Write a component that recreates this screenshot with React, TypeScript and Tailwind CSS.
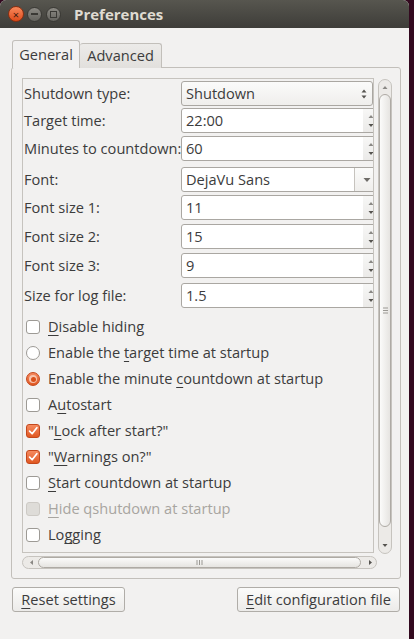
import React from 'react'

const FONT = { fontFamily: '"Open Sans", "Noto Sans", "DejaVu Sans", sans-serif' }

//////////
// small glyphs
const SpinArrows = () => (
    <svg width="8" height="22" viewBox="0 0 8 22">
        <path d="M1.5 8 L4 5 L6.5 8 Z" fill="#8a8884" />
        <path d="M1.5 14 L4 17 L6.5 14 Z" fill="#55534f" />
    </svg>
)

const ComboArrows = () => (
    <svg width="8" height="14" viewBox="0 0 8 14">
        <path d="M1.5 5.5 L4 2.5 L6.5 5.5 Z" fill="#55534f" />
        <path d="M1.5 8.5 L4 11.5 L6.5 8.5 Z" fill="#55534f" />
    </svg>
)

const Check = () => (
    <svg width="14" height="14" viewBox="0 0 14 14">
        <path d="M3 7.2 L6 10.2 L11.5 3.2" fill="none" stroke="#ffffff" strokeWidth="2" strokeLinecap="round" strokeLinejoin="round" />
    </svg>
)

//////////
// form fields
function SpinBox({ value }: { value: string }) {
    return (
        <div className="flex h-[25px] w-[199px] shrink-0 rounded-[3px] border border-[#aaa7a2] bg-white">
            <div className="flex flex-1 items-center pl-[4px]">{value}</div>
            <div className="flex w-[16px] items-center justify-center rounded-r-[3px] bg-gradient-to-b from-[#f7f7f6] to-[#ebeae8]">
                <SpinArrows />
            </div>
        </div>
    )
}

function Row({ label, children, className = '' }: { label: string; children: React.ReactNode; className?: string }) {
    return (
        <div className={`flex items-center ${className}`}>
            <div className="w-[158px] shrink-0 whitespace-nowrap pl-[1px]">{label}</div>
            {children}
        </div>
    )
}

function CheckRow({ children, checked = false, disabled = false }: { children: React.ReactNode; checked?: boolean; disabled?: boolean }) {
    let box = 'border-[#9d9a95] bg-white'
    if (checked) box = 'border-[#c4471b] bg-gradient-to-b from-[#f58a5e] to-[#e0571f]'
    if (disabled) box = 'border-[#cdcac5] bg-[#dedcd8]'
    return (
        <div className={`flex h-[26px] items-center pl-[3px] ${disabled ? 'text-[#a8a5a0]' : ''}`}>
            <div className={`flex h-[14px] w-[14px] items-center justify-center rounded-[3px] border ${box}`}>
                {checked && <Check />}
            </div>
            <span className="ml-[8px] whitespace-nowrap">{children}</span>
        </div>
    )
}

function RadioRow({ children, checked = false }: { children: React.ReactNode; checked?: boolean }) {
    return (
        <div className="flex h-[26px] items-center pl-[3px]">
            {checked ? (
                <div className="flex h-[14px] w-[14px] items-center justify-center rounded-full border border-[#c4471b] bg-gradient-to-b from-[#f58a5e] to-[#e0571f]">
                    <div className="flex h-[8px] w-[8px] items-center justify-center rounded-full bg-[#f7c4ad]">
                        <div className="h-[5px] w-[5px] rounded-full bg-[#d9501a]" />
                    </div>
                </div>
            ) : (
                <div className="h-[14px] w-[14px] rounded-full border border-[#9d9a95] bg-white" />
            )}
            <span className="ml-[8px] whitespace-nowrap">{children}</span>
        </div>
    )
}

const U = ({ children }: { children: React.ReactNode }) => (
    <span className="underline decoration-1 underline-offset-[3px]">{children}</span>
)

export default function App() {
    return (
        <div className="flex h-[639px] w-[414px] bg-[#33091f] text-[14.6px] text-[#3c3c3c]" style={FONT}>
            <div className="flex h-full w-[409px] flex-col overflow-hidden rounded-t-[6px] bg-[#f2f1f0]">

                {/* title bar */}
                <div className="flex h-[28px] shrink-0 items-center bg-gradient-to-b from-[#57564f] to-[#3e3d39] pl-[8px]">
                    <div className="flex h-[16px] w-[16px] items-center justify-center rounded-full border border-[#8a3012] bg-gradient-to-b from-[#f7885a] to-[#de4a17] text-[11px] leading-none text-[#3a1a0e]">
                        ×
                    </div>
                    <div className="ml-[3px] flex h-[15px] w-[15px] items-center justify-center rounded-full border border-[#3a3935] bg-gradient-to-b from-[#8c8a84] to-[#64635e]">
                        <div className="h-[2px] w-[7px] bg-[#3a3935]" />
                    </div>
                    <div className="ml-[4px] flex h-[15px] w-[15px] items-center justify-center rounded-full border border-[#3a3935] bg-gradient-to-b from-[#8c8a84] to-[#64635e]">
                        <div className="h-[7px] w-[7px] border border-[#3a3935]" />
                    </div>
                    <div className="ml-[13px] text-[15px] font-bold text-[#dfdbd2]">Preferences</div>
                </div>

                {/* body */}
                <div className="flex flex-1 flex-col pl-[11px] pr-[8px] pt-[12px]">

                    {/* tabs */}
                    <div className="relative z-10 -mb-px flex h-[28px] items-end pl-[1px]">
                        <div className="flex h-[28px] w-[68px] items-center justify-center rounded-t-[3px] border border-b-0 border-[#c2bfba] bg-[#f2f1f0]">
                            General
                        </div>
                        <div className="flex h-[25px] w-[82px] items-center justify-center rounded-t-[3px] border border-b-0 border-l-0 border-[#c2bfba] bg-gradient-to-b from-[#ecebe9] to-[#e2e0dd]">
                            Advanced
                        </div>
                    </div>

                    {/* tab panel */}
                    <div className="flex h-[512px] rounded-[3px] border border-[#c2bfba] pl-[10px] pt-[10px]">
                        <div className="flex w-[355px] flex-col">

                            {/* scroll frame */}
                            <div className="h-[475px] w-[352px] overflow-hidden border border-[#c6c3be]">
                                <div className="w-[420px] pt-[2px]">
                                    <Row label="Shutdown type:">
                                        <div className="flex h-[25px] w-[192px] shrink-0 items-center justify-between rounded-[3px] border border-[#aaa7a2] bg-gradient-to-b from-[#fbfbfa] to-[#efeeec] pl-[4px] pr-[4px]">
                                            <span>Shutdown</span>
                                            <ComboArrows />
                                        </div>
                                    </Row>
                                    <Row label="Target time:" className="mt-[2px]">
                                        <SpinBox value="22:00" />
                                    </Row>
                                    <Row label="Minutes to countdown:" className="mt-[3px]">
                                        <SpinBox value="60" />
                                    </Row>
                                    <Row label="Font:" className="mt-[6px]">
                                        <div className="flex h-[25px] w-[199px] shrink-0 rounded-[3px] border border-[#aaa7a2] bg-white">
                                            <div className="flex w-[173px] items-center border-r border-[#c6c3be] pl-[4px]">DejaVu Sans</div>
                                            <div className="flex flex-1 items-center justify-center bg-gradient-to-b from-[#fbfbfa] to-[#efeeec]">
                                                <svg width="8" height="8" viewBox="0 0 8 8">
                                                    <path d="M0.5 2 L7.5 2 L4 6 Z" fill="#6e6c68" />
                                                </svg>
                                            </div>
                                        </div>
                                    </Row>
                                    <Row label="Font size 1:" className="mt-[3px]">
                                        <SpinBox value="11" />
                                    </Row>
                                    <Row label="Font size 2:" className="mt-[4px]">
                                        <SpinBox value="15" />
                                    </Row>
                                    <Row label="Font size 3:" className="mt-[4px]">
                                        <SpinBox value="9" />
                                    </Row>
                                    <Row label="Size for log file:" className="mt-[5px]">
                                        <SpinBox value="1.5" />
                                    </Row>

                                    <div className="mt-[6px]">
                                        <CheckRow><U>D</U>isable hiding</CheckRow>
                                        <RadioRow>Enable the <U>t</U>arget time at startup</RadioRow>
                                        <RadioRow checked>Enable the minute <U>c</U>ountdown at startup</RadioRow>
                                        <CheckRow>A<U>u</U>tostart</CheckRow>
                                        <CheckRow checked>"<U>L</U>ock after start?"</CheckRow>
                                        <CheckRow checked>"<U>W</U>arnings on?"</CheckRow>
                                        <CheckRow><U>S</U>tart countdown at startup</CheckRow>
                                        <CheckRow disabled><U>H</U>ide qshutdown at startup</CheckRow>
                                        <CheckRow>Lo<U>g</U>ging</CheckRow>
                                    </div>
                                </div>
                            </div>

                            {/* horizontal scrollbar */}
                            <div className="mt-[3px] flex h-[13px] w-[355px] items-center rounded-full border border-[#c6c3be] bg-[#eceae7]">
                                <svg width="12" height="11" viewBox="0 0 12 11" className="ml-[3px] shrink-0">
                                    <path d="M7 3 L4 5.5 L7 8 Z" fill="#8a8884" />
                                </svg>
                                <div className="flex h-[11px] w-[324px] items-center justify-center rounded-full border border-[#aeaaa4] bg-gradient-to-b from-[#fbfbfa] to-[#e6e4e1]">
                                    <svg width="7" height="5" viewBox="0 0 7 5">
                                        <path d="M1 0 V5 M3.5 0 V5 M6 0 V5" stroke="#9a9893" strokeWidth="1" />
                                    </svg>
                                </div>
                                <svg width="12" height="11" viewBox="0 0 12 11" className="ml-[3px] shrink-0">
                                    <path d="M5 3 L8 5.5 L5 8 Z" fill="#55534f" />
                                </svg>
                            </div>
                        </div>

                        {/* vertical scrollbar */}
                        <div className="ml-[1px] mt-[1px] flex h-[475px] w-[14px] flex-col items-center rounded-full border border-[#c6c3be] bg-[#eceae7]">
                            <svg width="12" height="12" viewBox="0 0 12 12" className="mt-[2px] shrink-0">
                                <path d="M3.5 7 L6 4 L8.5 7 Z" fill="#8a8884" />
                            </svg>
                            <div className="flex h-[433px] w-[12px] shrink-0 items-center justify-center rounded-full border border-[#aeaaa4] bg-gradient-to-r from-[#fbfbfa] to-[#e6e4e1]">
                                <svg width="5" height="7" viewBox="0 0 5 7">
                                    <path d="M0 1 H5 M0 3.5 H5 M0 6 H5" stroke="#9a9893" strokeWidth="1" />
                                </svg>
                            </div>
                            <div className="flex-1" />
                            <svg width="12" height="12" viewBox="0 0 12 12" className="mb-[2px] shrink-0">
                                <path d="M3.5 5 L6 8 L8.5 5 Z" fill="#55534f" />
                            </svg>
                        </div>
                    </div>

                    {/* bottom buttons */}
                    <div className="mt-[8px] flex justify-between pl-[1px] pr-[1px]">
                        <button className="h-[25px] w-[113px] rounded-[3px] border border-[#b0ada8] bg-gradient-to-b from-[#fbfbfa] to-[#ecebe9]">
                            <U>R</U>eset settings
                        </button>
                        <button className="h-[25px] w-[163px] rounded-[3px] border border-[#b0ada8] bg-gradient-to-b from-[#fbfbfa] to-[#ecebe9]">
                            <U>E</U>dit configuration file
                        </button>
                    </div>
                </div>
            </div>
        </div>
    )
}
